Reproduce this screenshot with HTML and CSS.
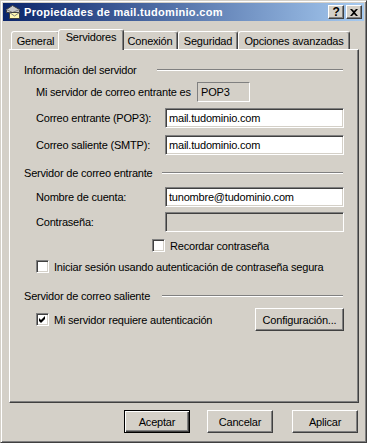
FILE: index.html
```html
<!DOCTYPE html>
<html lang="es">
<head>
    <meta charset="UTF-8">
    <title>Propiedades de mail.tudominio.com</title>
    <link rel="stylesheet" href="styles.css">
</head>
<body>
    <div class="window">
        <div class="titlebar">
            <svg class="app-icon" width="16" height="16" viewBox="0 0 16 16">
                <path d="M1.5 5.5 L7.5 1.5 L14.5 5.5 L14.5 8.5 L1.5 8.5 Z" fill="#c8c8c8" stroke="#404040"/>
                <path d="M1.5 5.5 L7.5 8.5 L14.5 5.5" fill="none" stroke="#808080"/>
                <rect x="4.5" y="8.5" width="10" height="6" fill="#fff8b0" stroke="#404040"/>
                <path d="M4.5 8.5 L9.5 12 L14.5 8.5" fill="none" stroke="#808080"/>
            </svg>
            <span class="title">Propiedades de mail.tudominio.com</span>
            <div class="caption-buttons">
                <span class="cap-btn help">?</span>
                <span class="cap-btn close">
                    <svg width="8" height="7" viewBox="0 0 8 7">
                        <path d="M0 0 H2 L4 2 L6 0 H8 L5 3.5 L8 7 H6 L4 5 L2 7 H0 L3 3.5 Z" fill="#000"/>
                    </svg>
                </span>
            </div>
        </div>

        <div class="tabs">
            <div class="tab tab-general">General</div>
            <div class="tab tab-servers active">Servidores</div>
            <div class="tab tab-connection">Conexión</div>
            <div class="tab tab-security">Seguridad</div>
            <div class="tab tab-advanced">Opciones avanzadas</div>
        </div>

        <div class="panel">
            <div class="section">
                <span class="section-label first">Información del servidor</span>
                <span class="etched"></span>
            </div>
            <div class="row row-type">
                <span class="type-label">Mi servidor de correo entrante es</span>
                <span class="static-box">POP3</span>
            </div>
            <div class="row row-in">
                <span class="field-label">Correo entrante (POP3):</span>
                <div class="textbox">mail.tudominio.com</div>
            </div>
            <div class="row row-out">
                <span class="field-label">Correo saliente (SMTP):</span>
                <div class="textbox">mail.tudominio.com</div>
            </div>

            <div class="section section-in">
                <span class="section-label">Servidor de correo entrante</span>
                <span class="etched"></span>
            </div>
            <div class="row row-account">
                <span class="field-label">Nombre de cuenta:</span>
                <div class="textbox">tunombre@tudominio.com</div>
            </div>
            <div class="row row-password">
                <span class="field-label">Contraseña:</span>
                <div class="textbox disabled"></div>
            </div>
            <div class="check-row row-remember">
                <span class="checkbox"></span>
                <span>Recordar contraseña</span>
            </div>
            <div class="check-row row-spa">
                <span class="checkbox"></span>
                <span>Iniciar sesión usando autenticación de contraseña segura</span>
            </div>

            <div class="section section-out">
                <span class="section-label">Servidor de correo saliente</span>
                <span class="etched"></span>
            </div>
            <div class="check-row row-auth">
                <span class="checkbox checked">
                    <svg width="7" height="7" viewBox="0 0 7 7">
                        <path d="M0 2 L2 4 L6 0 L6 3 L2 7 L0 5 Z" fill="#000"/>
                    </svg>
                </span>
                <span>Mi servidor requiere autenticación</span>
                <span class="button btn-config">Configuración...</span>
            </div>
        </div>

        <div class="buttons">
            <span class="button btn-default">Aceptar</span>
            <span class="button btn-cancel">Cancelar</span>
            <span class="button btn-apply">Aplicar</span>
        </div>
    </div>
</body>
</html>
```

FILE: styles.css
```css
* {
    box-sizing: border-box;
}
body {
    margin: 0;
    font-family: "Liberation Sans", Arial, sans-serif;
    font-size: 11px;
    letter-spacing: -0.2px;
    color: #000;
    background-color: #d4d0c8;
}
.window {
    width: 367px;
    height: 443px;
    padding: 2px;
    background-color: #d4d0c8;
    border: 1px solid;
    border-color: #d4d0c8 #404040 #404040 #d4d0c8;
    box-shadow: inset 1px 1px #fff, inset -1px -1px #808080;
}

/* Title bar */
.titlebar {
    height: 18px;
    display: flex;
    align-items: center;
    background: linear-gradient(to right, #0a246a, #a6caf0);
}
.app-icon {
    margin-left: 2px;
    flex: none;
}
.title {
    margin-left: 3px;
    color: #fff;
    font-weight: bold;
    letter-spacing: 0.3px;
    white-space: nowrap;
}
.caption-buttons {
    margin-left: auto;
    margin-right: 2px;
    display: flex;
    gap: 2px;
}
.cap-btn {
    width: 16px;
    height: 14px;
    display: flex;
    align-items: center;
    justify-content: center;
    background-color: #d4d0c8;
    border: 1px solid;
    border-color: #fff #404040 #404040 #fff;
    box-shadow: inset -1px -1px #808080;
}
.cap-btn.help {
    font-weight: bold;
    font-size: 12px;
    line-height: 12px;
}

/* Tabs */
.tabs {
    display: flex;
    align-items: flex-end;
    height: 20px;
    margin: 8px 0 0 8px;
}
.tab {
    height: 18px;
    padding-top: 3px;
    display: flex;
    justify-content: center;
    white-space: nowrap;
    background-color: #d4d0c8;
    border: 1px solid;
    border-bottom: none;
    border-color: #fff #404040 transparent #fff;
    border-radius: 3px 3px 0 0;
    box-shadow: inset -1px 0 #808080;
}
.tab.active {
    position: relative;
    z-index: 1;
    height: 21px;
    padding-top: 1px;
    margin: 0 -2px -1px -2px;
}
.tab-general { width: 49px; }
.tab-servers { width: 66px; }
.tab-connection { width: 56px; }
.tab-security { width: 60px; }
.tab-advanced { width: 112px; }

/* Panel */
.panel {
    height: 354px;
    margin: 0 5px 0 6px;
    padding: 13px 0 0 14px;
    border: 1px solid;
    border-color: #fff #404040 #404040 #fff;
    box-shadow: inset -1px -1px #808080;
}
.section {
    height: 14px;
    display: flex;
    align-items: center;
}
.section-label {
    width: 138px;
    flex: none;
    white-space: nowrap;
}
.section-label.first {
    width: 133px;
}
.etched {
    flex: 1;
    margin-right: 15px;
    border-top: 1px solid #808080;
    border-bottom: 1px solid #fff;
}
.section-in { margin-top: 11px; }
.section-out { margin-top: 16px; }

.row {
    height: 20px;
    margin-left: 12px;
    display: flex;
    align-items: center;
}
.row-type { margin-top: 5px; }
.row-in { margin-top: 6px; }
.row-out { margin-top: 7px; }
.row-account { margin-top: 7px; }
.row-password { margin-top: 5px; }

.type-label {
    width: 161px;
    flex: none;
    white-space: nowrap;
}
.static-box {
    width: 53px;
    height: 20px;
    padding-left: 3px;
    display: flex;
    align-items: center;
    border: 1px solid;
    border-color: #808080 #fff #fff #808080;
}
.field-label {
    width: 129px;
    flex: none;
    white-space: nowrap;
}
.textbox {
    width: 179px;
    height: 20px;
    padding-left: 3px;
    display: flex;
    align-items: center;
    white-space: nowrap;
    background-color: #fff;
    border: 1px solid;
    border-color: #808080 #fff #fff #808080;
    box-shadow: inset 1px 1px #404040, inset -1px -1px #d4d0c8;
}
.textbox.disabled {
    background-color: #d4d0c8;
}

/* Checkboxes */
.check-row {
    margin-left: 12px;
    display: flex;
    align-items: center;
    white-space: nowrap;
}
.row-remember {
    height: 13px;
    margin-top: 7px;
    margin-left: 128px;
}
.row-spa {
    height: 13px;
    margin-top: 8px;
}
.row-auth {
    height: 23px;
    margin-top: 5px;
}
.checkbox {
    width: 13px;
    height: 13px;
    margin-right: 5px;
    flex: none;
    display: flex;
    align-items: center;
    justify-content: center;
    background-color: #fff;
    border: 1px solid;
    border-color: #808080 #fff #fff #808080;
    box-shadow: inset 1px 1px #404040, inset -1px -1px #d4d0c8;
}

/* Buttons */
.button {
    height: 23px;
    display: flex;
    align-items: center;
    justify-content: center;
    white-space: nowrap;
    background-color: #d4d0c8;
    border: 1px solid;
    border-color: #fff #404040 #404040 #fff;
    box-shadow: inset -1px -1px #808080;
}
.btn-config {
    width: 89px;
    margin-left: auto;
    margin-right: 14px;
}
.buttons {
    display: flex;
    justify-content: flex-end;
    margin: 7px 6px 0 0;
}
.buttons .button {
    width: 66px;
}
.btn-default {
    border-color: #000;
    box-shadow: inset 1px 1px #fff, inset -1px -1px #404040, inset -2px -2px #808080;
}
.btn-cancel {
    margin-left: 17px;
}
.btn-apply {
    margin-left: 19px;
}
```
